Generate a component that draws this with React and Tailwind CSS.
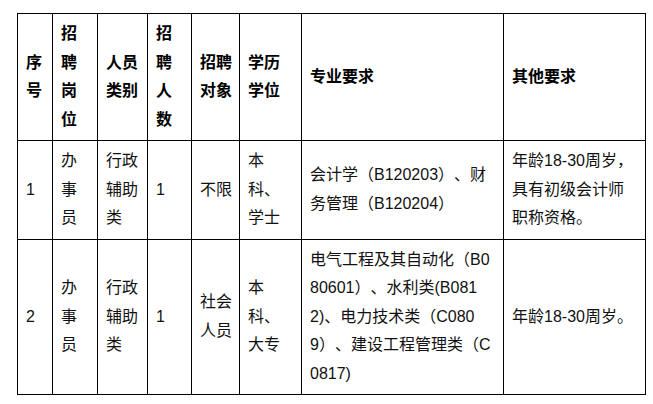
import React from "react";

const font = { fontFamily: '"Liberation Sans", "Noto Sans CJK SC", sans-serif' };

// line helper: each item is one line of text in a cell
const Lines = ({ items }) => (
  <>
    {items.map((t, i) => (
      <div key={i} className="whitespace-nowrap">
        {t}
      </div>
    ))}
  </>
);

const rows = [
  {
    h: "h-[97px]",
    cells: [
      ["1"],
      ["办", "事", "员"],
      ["行政", "辅助", "类"],
      ["1"],
      ["不限"],
      ["本", "科、", "学士"],
      ["会计学（B120203）、财", "务管理（B120204）"],
      ["年龄18-30周岁，", "具有初级会计师", "职称资格。"],
    ],
  },
  {
    h: "h-[155px]",
    cells: [
      ["2"],
      ["办", "事", "员"],
      ["行政", "辅助", "类"],
      ["1"],
      ["社会", "人员"],
      ["本", "科、", "大专"],
      [
        "电气工程及其自动化（B0",
        "80601）、水利类(B081",
        "2)、电力技术类（C080",
        "9）、建设工程管理类（C",
        "0817)",
      ],
      ["年龄18-30周岁。"],
    ],
  },
];

const header = [
  ["序", "号"],
  ["招", "聘", "岗", "位"],
  ["人员", "类别"],
  ["招", "聘", "人", "数"],
  ["招聘", "对象"],
  ["学历", "学位"],
  ["专业要求"],
  ["其他要求"],
];

const widths = ["w-[35px]", "w-[45px]", "w-[50px]", "w-[44px]", "w-[48px]", "w-[62px]", "w-[202px]", "w-[142px]"];

export default function App() {
  return (
    <div className="w-[653px] h-[404px] bg-white pt-[13px] pl-[17px] [text-spacing-trim:space-all]" style={font}>
      <table className="table-fixed border-collapse w-[628px] text-[16px] leading-[28.5px] text-[#111]">
        <colgroup>
          {widths.map((w, i) => (
            <col key={i} className={w} />
          ))}
        </colgroup>
        <thead>
          <tr className="h-[127px]">
            {header.map((c, i) => (
              <th key={i} className="border border-black pl-[8px] pr-[4px] py-[6px] align-middle text-left font-bold text-black">
                <Lines items={c} />
              </th>
            ))}
          </tr>
        </thead>
        <tbody>
          {rows.map((r, ri) => (
            <tr key={ri} className={r.h}>
              {r.cells.map((c, i) => (
                <td key={i} className="border border-black pl-[8px] pr-[4px] py-[6px] align-middle text-left">
                  <Lines items={c} />
                </td>
              ))}
            </tr>
          ))}
        </tbody>
      </table>
    </div>
  );
}
